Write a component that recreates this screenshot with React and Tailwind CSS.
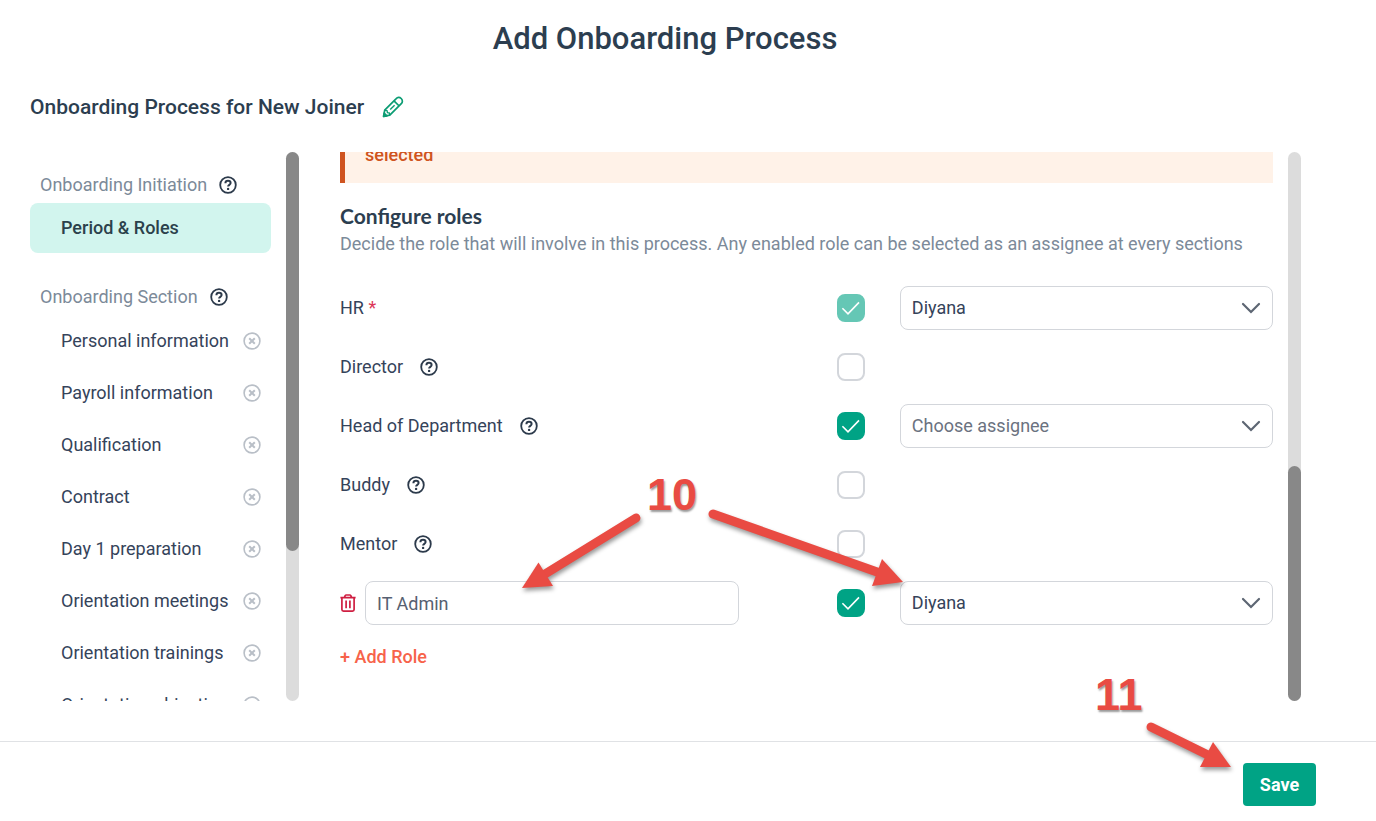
import React from "react";

const sections = [
  "Personal information",
  "Payroll information",
  "Qualification",
  "Contract",
  "Day 1 preparation",
  "Orientation meetings",
  "Orientation trainings",
  "Orientation objectives",
];

const roles = [
  { id: "hr", label: "HR", required: true, checked: true, disabled: true, assignee: "Diyana" },
  { id: "director", label: "Director", help: true },
  { id: "hod", label: "Head of Department", help: true, checked: true, assignee: "" },
  { id: "buddy", label: "Buddy", help: true },
  { id: "mentor", label: "Mentor", help: true },
  { id: "custom", name: "IT Admin", checked: true, assignee: "Diyana" },
];

function HelpIcon() {
  return (
    <svg className="size-[18px] shrink-0 text-[#2c3a4b]" viewBox="0 0 18 18" fill="none" stroke="currentColor" aria-hidden="true">
      <circle cx="9" cy="9" r="7.8" strokeWidth="1.8" />
      <path d="M6.4 7.2c0-1.5 1.1-2.4 2.6-2.4s2.6.9 2.6 2.2c0 1.8-2.5 1.9-2.5 3.6" strokeWidth="2" />
      <circle cx="9.1" cy="12.9" r="1.2" fill="currentColor" stroke="none" />
    </svg>
  );
}

function HelpButton({ topic }) {
  return (
    <button type="button" aria-label={`About ${topic}`} className="shrink-0">
      <HelpIcon />
    </button>
  );
}

function RemoveIcon() {
  return (
    <svg className="size-[18px]" viewBox="0 0 18 18" fill="none" stroke="currentColor" aria-hidden="true">
      <circle cx="9" cy="9" r="7.9" strokeWidth="1.6" />
      <path d="M6.2 6.2l5.6 5.6M11.8 6.2l-5.6 5.6" strokeWidth="2" />
    </svg>
  );
}

function PencilIcon() {
  return (
    <svg className="size-[22px]" viewBox="0 0 22 22" fill="none" stroke="currentColor" strokeWidth="1.7" strokeLinejoin="round" aria-hidden="true">
      <path d="M1.6 20.4l1.1-6.2L14.2 2.6c1.4-1.5 3.4-1.6 5-.1 1.6 1.6 1.5 3.7.1 5.1L7.8 19.2z" />
      <path d="M12 4.8l5.2 5.2" />
      <path d="M12.6 9.2l-4.4 4.4" strokeWidth="1.4" />
      <path d="M2.8 14.4l2.3.2.3 2.1 2 .3.4 2" strokeWidth="1.3" />
      <path d="M1.6 20.4l.6-3.2 2.6 2.6z" fill="currentColor" />
    </svg>
  );
}

function TrashIcon() {
  return (
    <svg className="h-[18px] w-4" viewBox="0 0 16 18" fill="none" stroke="currentColor" strokeWidth="1.7" aria-hidden="true">
      <path d="M0.4 3.7h15.2M4.4 3.4l.8-1.7c.2-.4.5-.7 1-.7h3.6c.5 0 .8.3 1 .7l.8 1.7M1.9 3.8v11.7c0 1 .6 1.6 1.6 1.6h9c1 0 1.6-.6 1.6-1.6V3.8M6.1 6.4v7.8M9.9 6.4v7.8" />
    </svg>
  );
}

function ScrollTrack({ thumb }) {
  return (
    <div className="flex h-full w-[13px] shrink-0 flex-col rounded-full bg-[#dcdcdc]" aria-hidden="true">
      {thumb}
    </div>
  );
}

function Checkbox({ label, checked, disabled }) {
  return (
    <label className={`relative block size-7 ${disabled ? "opacity-60" : ""}`}>
      <input
        type="checkbox"
        aria-label={`Enable ${label}`}
        defaultChecked={checked}
        disabled={disabled}
        className="peer block size-7 appearance-none rounded-lg border-2 border-[#d3d6db] bg-white checked:border-[#00a385] checked:bg-[#00a385]"
      />
      <svg className="pointer-events-none absolute inset-0 hidden size-7 text-white peer-checked:block" viewBox="0 0 28 28" fill="none" stroke="currentColor" strokeWidth="1.6" aria-hidden="true">
        <path d="M5.4 14.2l5.6 5.6L22 8.4" />
      </svg>
    </label>
  );
}

function AssigneeSelect({ label, value }) {
  return (
    <label className="relative block">
      <select
        aria-label={`Assignee for ${label}`}
        defaultValue={value}
        className={`block h-11 w-full appearance-none rounded-lg border border-[#d3d6db] bg-white pr-12 pl-[11px] ${value ? "text-[#35435a]" : "text-[#6b7280]"}`}
      >
        <option value="">Choose assignee</option>
        <option value="Diyana">Diyana</option>
      </select>
      <svg className="pointer-events-none absolute top-4 right-3 h-3 w-5 text-[#5d6673]" viewBox="0 0 20 12" fill="none" stroke="currentColor" strokeWidth="2.2" strokeLinecap="round" aria-hidden="true">
        <path d="M2 2l8 8 8-8" />
      </svg>
    </label>
  );
}

function RoleRow({ role }) {
  const label = role.label || role.name;
  return (
    <div className="grid h-11 grid-cols-[1fr_28px_40%] items-center gap-[35px]">
      {role.name ? (
        <div className="flex items-center gap-[9px]">
          <button type="button" aria-label="Delete role" className="shrink-0 text-[#cf1f42]">
            <TrashIcon />
          </button>
          <input
            aria-label="Role name"
            defaultValue={role.name}
            className="h-11 w-[81%] rounded-lg border border-[#d3d6db] bg-white px-[11px] text-[#566071]"
          />
        </div>
      ) : (
        <div className="flex items-center gap-[17px]">
          <span>
            {role.label}
            {role.required && <span className="text-[#dc3558]"> *</span>}
          </span>
          {role.help && <HelpButton topic={role.label} />}
        </div>
      )}
      <Checkbox label={label} checked={role.checked} disabled={role.disabled} />
      {role.checked && <AssigneeSelect label={label} value={role.assignee} />}
    </div>
  );
}

function Annotations() {
  return (
    <div className="pointer-events-none absolute inset-0">
      <svg className="absolute top-0 left-0 h-[821px] w-[1376px] text-[#e94b43] drop-shadow-[1px_3px_2px_rgba(0,0,0,0.4)]" viewBox="0 0 1376 821" fill="currentColor" stroke="currentColor" aria-hidden="true">
        <g strokeWidth="9" strokeLinecap="round">
          <path d="M636 518L545 574" />
          <path d="M713 514L880 573" />
          <path d="M1151 727L1210 756" />
        </g>
        <g stroke="none">
          <path d="M522 588l16.500-25.500 14.500 23.500z" />
          <path d="M903 582l-21-23-10 27z" />
          <path d="M1231 767l-18-25-13 25z" />
        </g>
      </svg>
      <span className="absolute top-[470px] left-[647px] font-['Liberation_Sans',Arial,sans-serif] text-[45px] leading-[50px] font-bold text-[#e94b43] [text-shadow:1px_2px_2px_rgba(0,0,0,0.4)]">10</span>
      <span className="absolute top-[670px] left-[1095px] font-['Liberation_Sans',Arial,sans-serif] text-[45px] leading-[50px] font-bold text-[#e94b43] [text-shadow:1px_2px_2px_rgba(0,0,0,0.4)]">11</span>
    </div>
  );
}

export default function App() {
  return (
    <div className="relative flex h-screen flex-col overflow-hidden bg-white font-['Roboto',sans-serif] text-[18px] leading-6 text-[#35435a]">
      <header className="pt-[21px] pr-[46px]">
        <h1 className="text-center text-[31px] leading-9 font-medium text-[#2c3e50]">Add Onboarding Process</h1>
      </header>
      <div className="mt-[35px] flex items-center gap-[18px] pl-[30px]">
        <h2 className="text-[21px] leading-[30px] font-medium text-[#2c3e50]">Onboarding Process for New Joiner</h2>
        <button type="button" aria-label="Edit process name" className="text-[#0b9c73]">
          <PencilIcon />
        </button>
      </div>

      <div className="mt-[30px] mb-10 flex min-h-0 flex-1 pr-[75px] pl-[30px]">
        <nav aria-label="Onboarding steps" className="w-[241px] shrink-0 overflow-hidden pt-[15px]">
          <div className="flex h-9 items-center gap-3 pl-[10px] text-[#7c8a99]">
            <span>Onboarding Initiation</span>
            <HelpButton topic="onboarding initiation" />
          </div>
          <a href="#period" className="flex h-[50px] items-center rounded-lg bg-[#d2f5ee] pl-[31px] font-medium text-[#2b414b]">
            Period &amp; Roles
          </a>
          <div className="mt-[26px] flex h-9 items-center gap-3 pl-[10px] text-[#7c8a99]">
            <span>Onboarding Section</span>
            <HelpButton topic="onboarding section" />
          </div>
          <ul>
            {sections.map((name) => (
              <li key={name} className="flex h-[52px] items-center justify-between pr-[10px] pl-[31px]">
                <a href="#section" className="whitespace-nowrap">{name}</a>
                <button type="button" aria-label={`Remove ${name}`} className="shrink-0 text-[#b9bfc7]">
                  <RemoveIcon />
                </button>
              </li>
            ))}
          </ul>
        </nav>
        <div className="ml-[15px] shrink-0">
          <ScrollTrack thumb={<div className="h-8/11 rounded-full bg-[#888888]" />} />
        </div>

        <main className="ml-[41px] flex min-w-0 flex-1 flex-col justify-end overflow-hidden">
          <div className="border-l-[5px] border-[#cf5420] bg-[#fff2e8] px-5 pt-4 pb-4 font-medium text-[#cf5420]">
            <p>selected</p>
          </div>
          <h3 className="mt-[19px] font-['Lato',sans-serif] text-[21px] leading-7 font-bold text-[#2c3e50]">Configure roles</h3>
          <p className="mt-[2px] whitespace-nowrap text-[#7c8a99]">
            Decide the role that will involve in this process. Any enabled role can be selected as an assignee at every sections
          </p>
          <div className="mt-[30px] flex flex-col gap-[15px]">
            {roles.map((role) => (
              <RoleRow key={role.id} role={role} />
            ))}
          </div>
          <button type="button" className="mt-5 mb-8 self-start font-medium text-[#f7634a]">
            + Add Role
          </button>
        </main>
        <div className="ml-[15px] shrink-0">
          <ScrollTrack thumb={<div className="mt-auto h-3/7 rounded-full bg-[#888888]" />} />
        </div>
      </div>

      <footer className="flex h-20 shrink-0 items-center justify-end border-t border-[#e0e2e5] pt-[6px] pr-[60px]">
        <button type="button" className="h-[43px] min-w-[73px] rounded bg-[#00a385] px-4 font-bold text-white">
          Save
        </button>
      </footer>
      <Annotations />
    </div>
  );
}
